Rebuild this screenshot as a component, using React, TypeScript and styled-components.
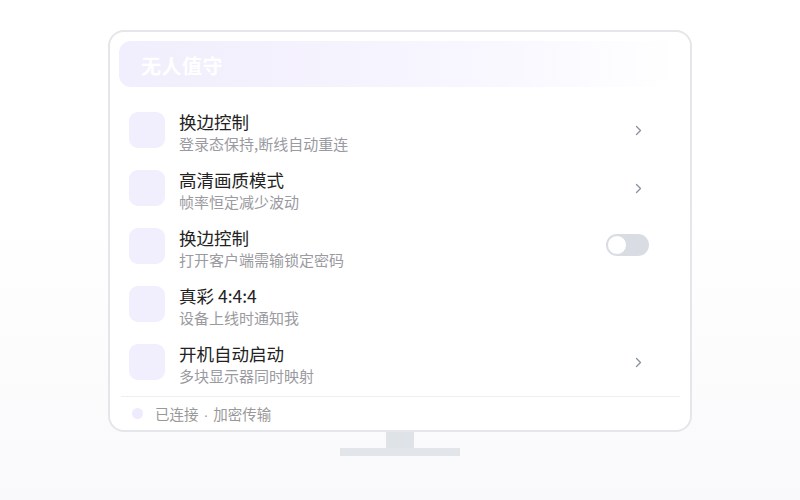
import React from 'react'
import styled, { createGlobalStyle } from 'styled-components'

const GlobalStyle = createGlobalStyle`
  html, body {
    margin: 0;
    padding: 0;
  }
  body {
    font-family: "Noto Sans CJK SC", "Noto Sans", sans-serif;
    background: linear-gradient(180deg, #ffffff 0%, #ffffff 40%, #f9f9fb 100%);
    width: 800px;
    height: 500px;
    overflow: hidden;
  }
`

const Page = styled.div`
  width: 800px;
  height: 500px;
  display: flex;
  flex-direction: column;
  align-items: center;
  padding-top: 30px;
  box-sizing: border-box;
`

const Screen = styled.div`
  width: 584px;
  height: 402px;
  box-sizing: border-box;
  border: 2px solid #e4e6ea;
  border-radius: 16px;
  background: #fff;
  padding: 9px 10px 0 9px;
  display: flex;
  flex-direction: column;
`

const Header = styled.div`
  height: 46px;
  flex-shrink: 0;
  border-radius: 12px;
  background: linear-gradient(90deg, #f1eefd 0%, #f6f4fe 50%, #fbfaff 80%, #ffffff 100%);
  display: flex;
  align-items: center;
  justify-content: space-between;
  padding: 0 28px 0 22px;
`

const HeaderTitle = styled.div`
  color: #ffffff;
  font-size: 20px;
  font-weight: 700;
  letter-spacing: 0.5px;
  margin-top: 2px;
`

const HeaderTag = styled.div`
  color: #ffffff;
  font-size: 12px;
  opacity: 0.9;
`

const List = styled.div`
  display: flex;
  flex-direction: column;
  padding-top: 14px;
`

const Row = styled.div`
  height: 58px;
  display: flex;
  align-items: center;
  padding: 0 38px 0 10px;
`

const IconBox = styled.div`
  width: 36px;
  height: 36px;
  border-radius: 9px;
  background: #f1eefd;
  flex-shrink: 0;
`

const Texts = styled.div`
  flex: 1;
  display: flex;
  flex-direction: column;
  margin-left: 14px;
  margin-top: 5px;
`

const Title = styled.div`
  font-size: 17.5px;
  color: #222;
  line-height: 22px;
`

const Sub = styled.div`
  font-size: 15px;
  color: #9a9aa0;
  line-height: 22px;
`

const Chevron = styled.svg`
  width: 7px;
  height: 11px;
  margin-top: 1px;
`

const Toggle = styled.div`
  width: 43px;
  height: 22px;
  border-radius: 11px;
  background: #d9dce2;
  position: relative;
  margin-right: -7px;
  margin-top: -3px;
  &::after {
    content: '';
    position: absolute;
    left: 1px;
    top: 1px;
    width: 18px;
    height: 18px;
    border-radius: 50%;
    background: #fff;
    border: 1px solid #d9dce2;
  }
`

const Divider = styled.div`
  height: 1px;
  flex-shrink: 0;
  background: #eceef2;
  margin: 5px 0 0 2px;
`

const Footer = styled.div`
  display: flex;
  align-items: center;
  height: 34px;
  padding-left: 13px;
  gap: 12px;
`

const Dot = styled.div`
  width: 11px;
  height: 11px;
  border-radius: 50%;
  background: #efebfd;
`

const FooterText = styled.div`
  font-size: 14.5px;
  color: #999;
`

const Sep = styled.span`
  font-family: "Liberation Sans", sans-serif;
  margin: 0 5px;
`

const Neck = styled.div`
  width: 28px;
  height: 16px;
  background: #dfe2e6;
`

const Base = styled.div`
  width: 120px;
  height: 8px;
  background: #e2e5e9;
`

type Item = { title: string; sub: string; action: 'chevron' | 'toggle' | 'none' }

const items: Item[] = [
  { title: '换边控制', sub: '登录态保持,断线自动重连', action: 'chevron' },
  { title: '高清画质模式', sub: '帧率恒定减少波动', action: 'chevron' },
  { title: '换边控制', sub: '打开客户端需输锁定密码', action: 'toggle' },
  { title: '真彩 4:4:4', sub: '设备上线时通知我', action: 'none' },
  { title: '开机自动启动', sub: '多块显示器同时映射', action: 'chevron' },
]

export default function App() {
  return (
    <>
      <GlobalStyle />
      <Page>
        <Screen>
          <Header>
            <HeaderTitle>无人值守</HeaderTitle>
            <HeaderTag>在线 ·</HeaderTag>
          </Header>
          <List>
            {items.map((it, i) => (
              <Row key={i}>
                <IconBox />
                <Texts>
                  <Title>{it.title}</Title>
                  <Sub>{it.sub}</Sub>
                </Texts>
                {it.action === 'chevron' && (
                  <Chevron viewBox="0 0 7 11">
                    <path d="M1.5 1.5 L5.5 5.5 L1.5 9.5" fill="none" stroke="#8a8f99" strokeWidth="1.3" strokeLinecap="round" strokeLinejoin="round" />
                  </Chevron>
                )}
                {it.action === 'toggle' && <Toggle />}
              </Row>
            ))}
          </List>
          <Divider />
          <Footer>
            <Dot />
            <FooterText>
              已连接<Sep>·</Sep>加密传输
            </FooterText>
          </Footer>
        </Screen>
        <Neck />
        <Base />
      </Page>
    </>
  )
}
